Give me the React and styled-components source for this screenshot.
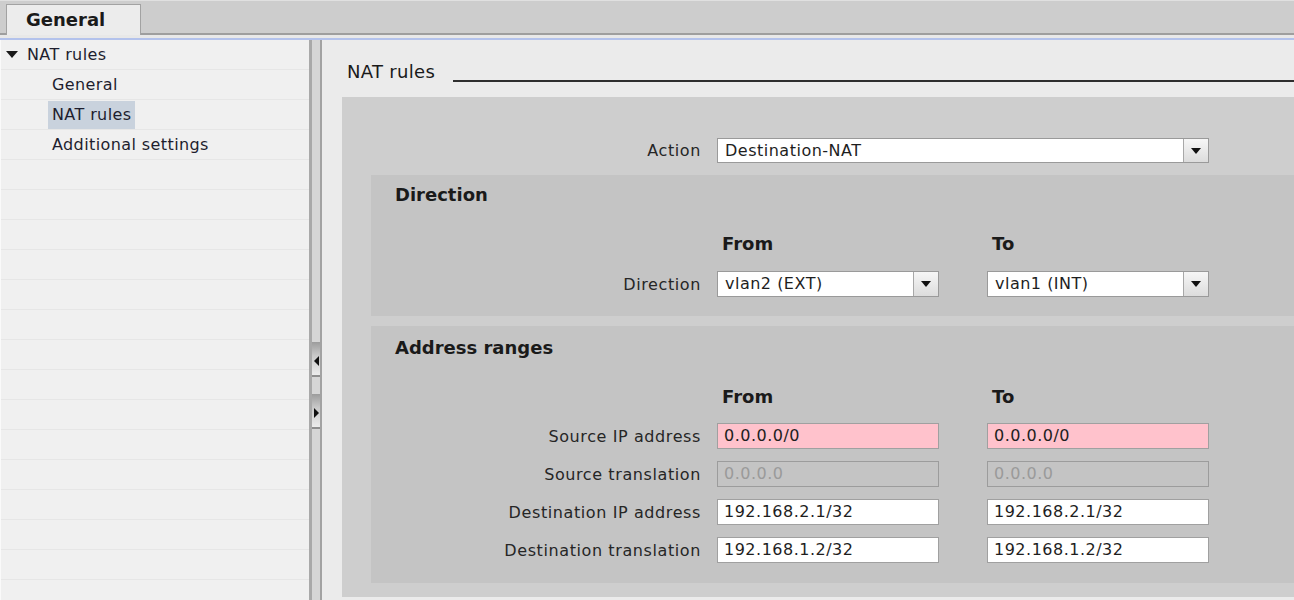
import React from 'react'
import styled, {createGlobalStyle} from 'styled-components'

const GlobalStyle = createGlobalStyle`
body {
    margin: 0;
    font-family: "DejaVu Sans", "Liberation Sans", sans-serif;
    color: #222;
    overflow: hidden;
}
`;

const sideRows = 19

export default function App() {
  return (
    <Page>
        <GlobalStyle/>
        <TabBar>
            <Tab>General</Tab>
        </TabBar>
        <Divider/>
        <Body>
            <Sidebar>
                <TreeRow>
                    <Caret/>
                    <TreeText>NAT rules</TreeText>
                </TreeRow>
                <TreeRow $child>
                    <TreeText>General</TreeText>
                </TreeRow>
                <TreeRow $child>
                    <TreeText $active>NAT rules</TreeText>
                </TreeRow>
                <TreeRow $child>
                    <TreeText>Additional settings</TreeText>
                </TreeRow>
                {Array.from({length: sideRows - 4}).map((_, i) => (
                    <TreeRow key={i}/>
                ))}
            </Sidebar>
            <Splitter>
                <SplitBtn><Arrow $left/></SplitBtn>
                <SplitBtn><Arrow/></SplitBtn>
            </Splitter>
            <Main>
                <TitleRow>
                    <Title>NAT rules</Title>
                    <Rule/>
                </TitleRow>
                <Panel>
                    <ActionRow>
                        <ActionLabel>Action</ActionLabel>
                        <Select $width={492} $height={25}>
                            <Value>Destination-NAT</Value>
                            <DropBtn><Tri/></DropBtn>
                        </Select>
                    </ActionRow>

                    <Section>
                        <Heading>Direction</Heading>
                        <HeadRow>
                            <Label/>
                            <Pair>
                                <ColHead>From</ColHead>
                                <ColHead>To</ColHead>
                            </Pair>
                        </HeadRow>
                        <Row $top={15}>
                            <Label>Direction</Label>
                            <Pair>
                                <Select $width={222} $height={26}>
                                    <Value>vlan2 (EXT)</Value>
                                    <DropBtn><Tri/></DropBtn>
                                </Select>
                                <Select $width={222} $height={26}>
                                    <Value>vlan1 (INT)</Value>
                                    <DropBtn><Tri/></DropBtn>
                                </Select>
                            </Pair>
                        </Row>
                    </Section>

                    <Section $gap={10} $padTop={10} $padBottom={20}>
                        <Heading>Address ranges</Heading>
                        <HeadRow>
                            <Label/>
                            <Pair>
                                <ColHead>From</ColHead>
                                <ColHead>To</ColHead>
                            </Pair>
                        </HeadRow>
                        <Row $top={14}>
                            <Label>Source IP address</Label>
                            <Pair>
                                <Field $kind="error">0.0.0.0/0</Field>
                                <Field $kind="error">0.0.0.0/0</Field>
                            </Pair>
                        </Row>
                        <Row $top={12}>
                            <Label>Source translation</Label>
                            <Pair>
                                <Field $kind="disabled">0.0.0.0</Field>
                                <Field $kind="disabled">0.0.0.0</Field>
                            </Pair>
                        </Row>
                        <Row $top={12}>
                            <Label>Destination IP address</Label>
                            <Pair>
                                <Field>192.168.2.1/32</Field>
                                <Field>192.168.2.1/32</Field>
                            </Pair>
                        </Row>
                        <Row $top={12}>
                            <Label>Destination translation</Label>
                            <Pair>
                                <Field>192.168.1.2/32</Field>
                                <Field>192.168.1.2/32</Field>
                            </Pair>
                        </Row>
                    </Section>
                </Panel>
            </Main>
        </Body>
    </Page>
  )
}

const Page = styled.div`
width: 1294px;
height: 600px;
display: flex;
flex-direction: column;
overflow: hidden;
background: #ebebeb;
`;

const TabBar = styled.div`
height: 32px;
background: #cdcdcd;
border-top: 1px solid #e0e0e0;
border-bottom: 2px solid #9e9e9e;
padding-left: 6px;
display: flex;
align-items: flex-end;
flex-shrink: 0;
`;

const Tab = styled.div`
width: 114px;
height: 30px;
margin-bottom: -2px;
padding-left: 19px;
background: #ececec;
border: 1px solid #a2a2a2;
border-bottom: none;
font-size: 18px;
font-weight: 700;
line-height: 30px;
color: #1a1a1a;
`;

const Divider = styled.div`
height: 3px;
background: #e8e8e8;
border-bottom: 2px solid #b3c2ec;
flex-shrink: 0;
`;

const Body = styled.div`
flex: 1;
display: flex;
min-height: 0;
`;

const Sidebar = styled.div`
width: 308px;
background: #f0f0f0;
border-left: 1px solid #fafafa;
overflow: hidden;
flex-shrink: 0;
`;

const TreeRow = styled.div`
height: 29px;
border-bottom: 1px solid #e6e6e6;
display: flex;
align-items: center;
padding-left: ${p => p.$child ? '47px' : '5px'};
`;

const Caret = styled.div`
width: 0;
height: 0;
border-left: 6px solid transparent;
border-right: 6px solid transparent;
border-top: 7px solid #1a1a1a;
margin-right: 5px;
`;

const TreeText = styled.span`
font-size: 16px;
line-height: 28px;
padding: 0 4px 0 ${p => p.$active ? '4px' : '0'};
margin-left: ${p => p.$active ? '0' : '4px'};
background: ${p => p.$active ? '#c9d2dd' : 'transparent'};
color: #1e1e2e;
letter-spacing: 0.4px;
`;

const Splitter = styled.div`
width: 8px;
background: #d6d6d6;
border-left: 3px solid #a9a9a9;
border-right: 2px solid #a2a2a2;
display: flex;
flex-direction: column;
gap: 17px;
padding-top: 302px;
flex-shrink: 0;
`;

const SplitBtn = styled.div`
height: 35px;
background: linear-gradient(#9c9c9c, #c8c8c8 40%, #ececec);
border-bottom: 2px solid #8e8e8e;
display: flex;
justify-content: center;
padding-top: 14px;
box-sizing: border-box;
`;

const Arrow = styled.div`
width: 0;
height: 0;
border-top: 5px solid transparent;
border-bottom: 5px solid transparent;
${p => p.$left
    ? 'border-right: 5px solid #111;'
    : 'border-left: 5px solid #111;'}
`;

const Main = styled.div`
flex: 1;
background: #ebebeb;
padding-top: 20px;
overflow: hidden;
min-width: 0;
`;

const TitleRow = styled.div`
display: flex;
height: 24px;
padding-left: 25px;
`;

const Title = styled.div`
font-size: 18px;
line-height: 24px;
letter-spacing: 0.3px;
color: #1a1a1a;
`;

const Rule = styled.div`
flex: 1;
height: 2px;
background: #2e2e2e;
align-self: flex-end;
margin: 0 0 2px 18px;
`;

const Panel = styled.div`
margin: 13px 0 0 20px;
background: #cecece;
padding: 41px 0 14px 0;
`;

const ActionRow = styled.div`
display: flex;
align-items: center;
`;

const ActionLabel = styled.div`
width: 359px;
text-align: right;
margin-right: 16px;
font-size: 16px;
letter-spacing: 0.6px;
flex-shrink: 0;
color: #262626;
`;

const Section = styled.div`
margin: ${p => p.$gap || 12}px 0 0 29px;
background: #c4c4c4;
padding: ${p => p.$padTop || 8}px 0 ${p => p.$padBottom || 19}px 0;
`;

const Heading = styled.div`
font-size: 18px;
font-weight: 700;
line-height: 24px;
padding-left: 24px;
color: #1a1a1a;
`;

const Row = styled.div`
display: flex;
align-items: center;
margin-top: ${p => p.$top || 0}px;
`;

const HeadRow = styled(Row)`
margin-top: 25px;
height: 24px;
`;

const Label = styled.div`
width: 330px;
text-align: right;
margin-right: 16px;
font-size: 16px;
letter-spacing: 0.6px;
flex-shrink: 0;
color: #262626;
`;

const Pair = styled.div`
display: flex;
gap: 48px;
`;

const ColHead = styled.div`
width: 217px;
padding-left: 5px;
font-size: 18px;
font-weight: 700;
line-height: 24px;
color: #1a1a1a;
`;

const Select = styled.div`
width: ${p => p.$width}px;
height: ${p => p.$height}px;
box-sizing: border-box;
display: flex;
background: #fff;
border: 1px solid #9a9a9a;
flex-shrink: 0;
`;

const Value = styled.div`
flex: 1;
padding-left: 7px;
font-size: 16px;
line-height: 23px;
letter-spacing: 0.5px;
color: #1e1e1e;
white-space: nowrap;
`;

const DropBtn = styled.div`
width: 24px;
border-left: 1px solid #a8a8a8;
background: linear-gradient(#f6f6f6, #dcdcdc);
display: flex;
align-items: center;
justify-content: center;
`;

const Tri = styled.div`
width: 0;
height: 0;
border-left: 5px solid transparent;
border-right: 5px solid transparent;
border-top: 6px solid #111;
`;

const fieldBg = {
    error: '#ffc2cc',
    disabled: 'transparent',
}

const Field = styled.div`
width: 222px;
height: 26px;
box-sizing: border-box;
border: 1px solid ${p => p.$kind === 'disabled' ? '#9c9c9c' : '#a0a0a0'};
background: ${p => fieldBg[p.$kind] || '#fff'};
color: ${p => p.$kind === 'disabled' ? '#9a9a9a' : '#1e1e1e'};
padding-left: 6px;
font-size: 16px;
line-height: 24px;
letter-spacing: 0.5px;
white-space: nowrap;
`;
